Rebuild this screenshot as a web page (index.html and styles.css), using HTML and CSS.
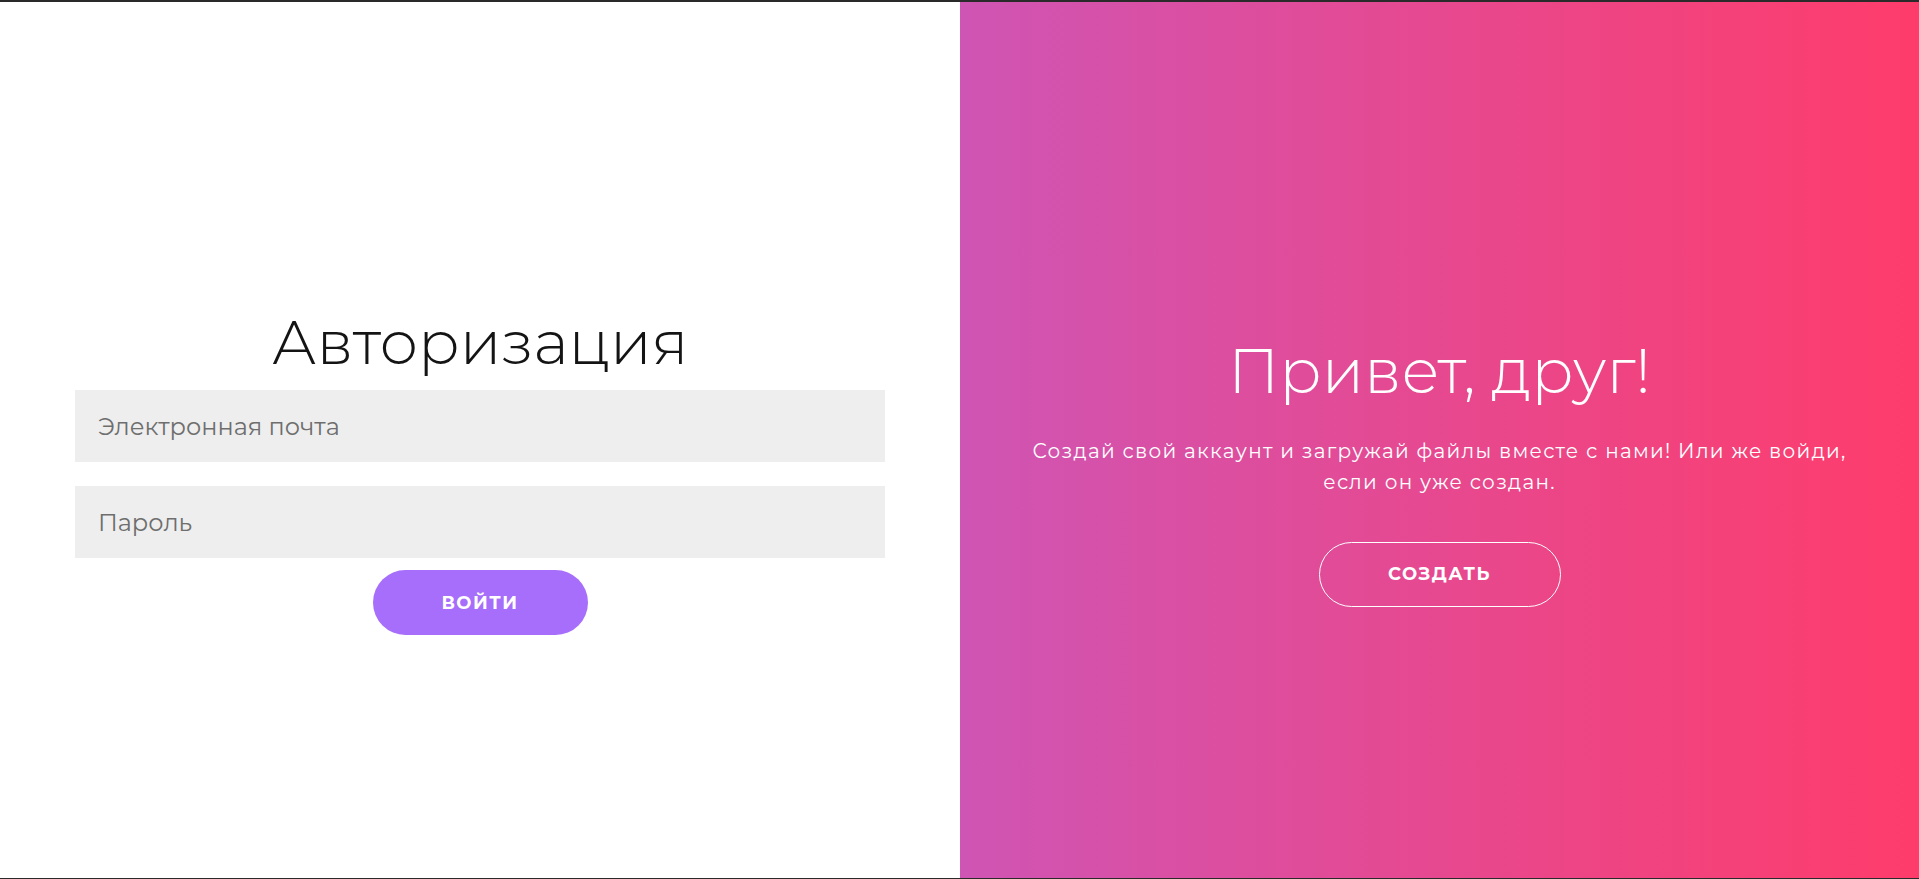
FILE: index.html
```html
<!DOCTYPE html>
<html lang="ru">
<head>
<meta charset="utf-8">
<title>Авторизация</title>
<link rel="stylesheet" href="styles.css">
</head>
<body>
<div class="page">
  <section class="panel panel--signin">
    <form class="form" onsubmit="return false">
      <h1 class="title">Авторизация</h1>
      <input class="field" type="email" placeholder="Электронная почта">
      <input class="field field--last" type="password" placeholder="Пароль">
      <button class="btn btn--primary" type="submit">Войти</button>
    </form>
  </section>
  <section class="panel panel--overlay">
    <h1 class="title title--light">Привет, друг!</h1>
    <p class="lead">Создай свой аккаунт и загружай файлы вместе с нами! Или же войди,<br>если он уже создан.</p>
    <button class="btn btn--ghost" type="button">Создать</button>
  </section>
</div>
</body>
</html>
```
FILE: styles.css
```css
html, body {
  margin: 0;
  height: 100%;
}

body {
  font-family: "Montserrat", "Inter", "Noto Sans", sans-serif;
  background: #fff;
}

.page {
  display: grid;
  grid-template-columns: 960px 1fr;
  height: 100vh;
  box-sizing: border-box;
  border-top: 2px solid #2a2a2a;
  border-bottom: 1px solid #2a2a2a;
}

.panel {
  display: flex;
  flex-direction: column;
  align-items: center;
  justify-content: center;
  padding-top: 62px;
  box-sizing: border-box;
}

.panel--signin {
  background: #fff;
}

.panel--overlay {
  background: linear-gradient(to right, #cf55b4, #fe3c6b);
  color: #fff;
  text-align: center;
}

.form {
  width: 810px;
  display: flex;
  flex-direction: column;
  align-items: center;
  margin: 0;
}

.title {
  margin: 0 0 13px;
  font-size: 61px;
  line-height: 70px;
  font-weight: 300;
  letter-spacing: 0;
  color: #141414;
}

.title--light {
  color: #fff;
  font-size: 62px;
  margin-bottom: 30px;
}

.field {
  width: 100%;
  height: 72px;
  box-sizing: border-box;
  border: none;
  outline: none;
  background: #eeeeee;
  padding: 0 23px;
  margin: 0 0 24px;
  font-family: inherit;
  font-size: 24px;
  color: #333;
}

.field::placeholder {
  color: #6e6e6e;
}

.field--last {
  margin-bottom: 12px;
}

.lead {
  margin: 0 0 44px;
  font-size: 20px;
  line-height: 31px;
  letter-spacing: 1.3px;
}

.btn {
  height: 65px;
  border-radius: 33px;
  font-family: inherit;
  font-size: 18px;
  font-weight: 700;
  letter-spacing: 1.5px;
  text-transform: uppercase;
  color: #fff;
  cursor: pointer;
  padding: 0;
}

.btn--primary {
  width: 215px;
  border: none;
  background: #a66efa;
}

.btn--ghost {
  width: 242px;
  border: 1px solid #fff;
  background: transparent;
}
```
